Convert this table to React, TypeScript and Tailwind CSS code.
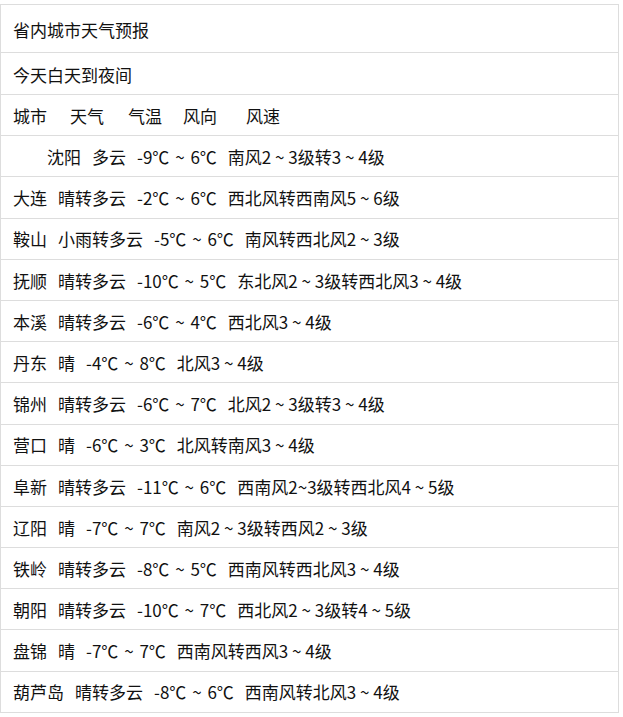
import React from 'react';

const rows: string[][] = [
  ['大连', '晴转多云', '-2℃ ~ 6℃', '西北风转西南风5 ~ 6级'],
  ['鞍山', '小雨转多云', '-5℃ ~ 6℃', '南风转西北风2 ~ 3级'],
  ['抚顺', '晴转多云', '-10℃ ~ 5℃', '东北风2 ~ 3级转西北风3 ~ 4级'],
  ['本溪', '晴转多云', '-6℃ ~ 4℃', '西北风3 ~ 4级'],
  ['丹东', '晴', '-4℃ ~ 8℃', '北风3 ~ 4级'],
  ['锦州', '晴转多云', '-6℃ ~ 7℃', '北风2 ~ 3级转3 ~ 4级'],
  ['营口', '晴', '-6℃ ~ 3℃', '北风转南风3 ~ 4级'],
  ['阜新', '晴转多云', '-11℃ ~ 6℃', '西南风2~3级转西北风4 ~ 5级'],
  ['辽阳', '晴', '-7℃ ~ 7℃', '南风2 ~ 3级转西风2 ~ 3级'],
  ['铁岭', '晴转多云', '-8℃ ~ 5℃', '西南风转西北风3 ~ 4级'],
  ['朝阳', '晴转多云', '-10℃ ~ 7℃', '西北风2 ~ 3级转4 ~ 5级'],
  ['盘锦', '晴', '-7℃ ~ 7℃', '西南风转西风3 ~ 4级'],
  ['葫芦岛', '晴转多云', '-8℃ ~ 6℃', '西南风转北风3 ~ 4级'],
];

const Row: React.FC<{ children: React.ReactNode; className?: string }> = ({ children, className }) => (
  <div className={`flex items-center border-b border-[#dddddd] pl-[12px] whitespace-pre ${className || 'h-[41.2px] pt-[1px]'}`}>
    {children}
  </div>
);

// temperature: widen the tilde a little, the reference font is wider there
const Temp: React.FC<{ text: string }> = ({ text }) => {
  const [a, b] = text.split(' ~ ');
  return (
    <span>
      {a}
      <span className="mx-[2px]"> ~ </span>
      {b}
    </span>
  );
};

const Segs: React.FC<{ items: string[] }> = ({ items }) => (
  <div className="flex gap-[11px]">
    {items.map((s, i) => (i === 2 ? <Temp key={i} text={s} /> : <span key={i}>{s}</span>))}
  </div>
);

export default function App() {
  return (
    <div className="bg-white min-h-screen pt-[4px]">
      <div
        className="w-[619px] border-l border-r border-t border-[#dddddd] text-[17px] text-[#111111]"
        style={{ fontFamily: '"Noto Sans CJK SC", "Noto Sans", sans-serif' }}
      >
        <Row className="h-[48px] pt-[3px]">省内城市天气预报</Row>
        <Row className="h-[42px] pt-[2px]">今天白天到夜间</Row>
        <Row>
          <span className="w-[57px]">城市</span>
          <span className="w-[58px]">天气</span>
          <span className="w-[55px]">气温</span>
          <span className="w-[63px]">风向</span>
          <span>风速</span>
        </Row>
        <Row>
          <div className="pl-[34px]">
            <Segs items={['沈阳', '多云', '-9℃ ~ 6℃', '南风2 ~ 3级转3 ~ 4级']} />
          </div>
        </Row>
        {rows.map((r) => (
          <Row key={r[0]}>
            <Segs items={r} />
          </Row>
        ))}
      </div>
    </div>
  );
}
